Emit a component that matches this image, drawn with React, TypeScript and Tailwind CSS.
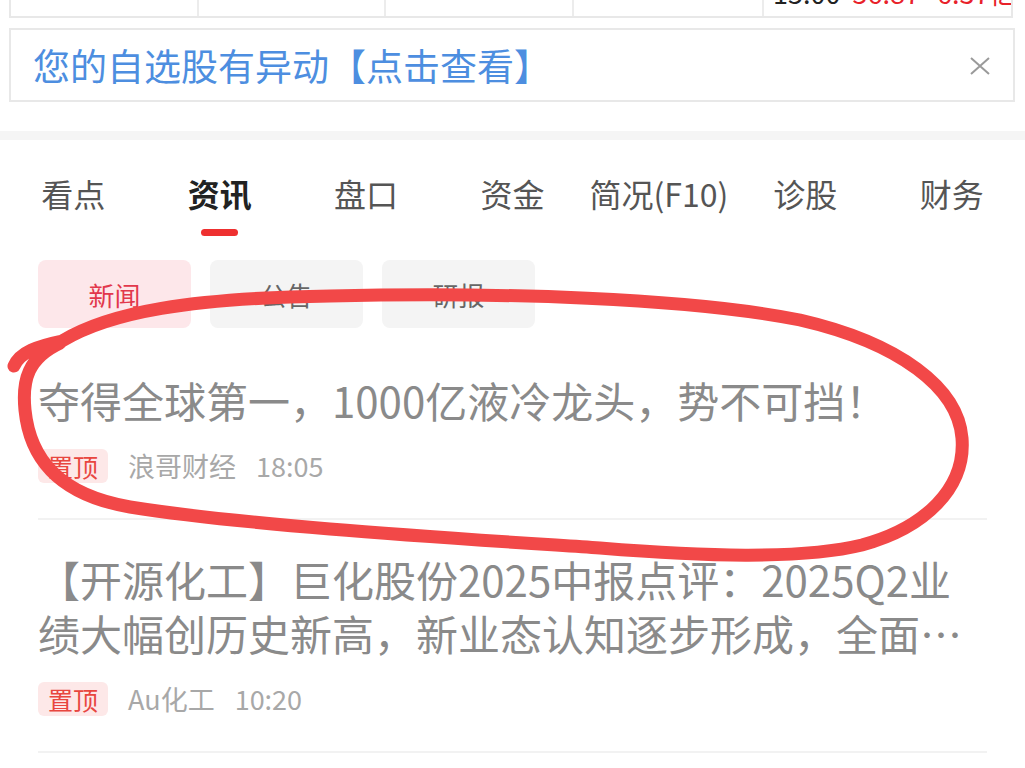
import React from "react";

const tabs = ["看点", "资讯", "盘口", "资金", "简况(F10)", "诊股", "财务"];
const subTabs = ["新闻", "公告", "研报"];

type News = {
  lines: string[];
  source: string;
  time: string;
};

const news: News[] = [
  {
    lines: ["夺得全球第一，1000亿液冷龙头，势不可挡！"],
    source: "浪哥财经",
    time: "18:05",
  },
  {
    lines: [
      "【开源化工】巨化股份2025中报点评：2025Q2业",
      "绩大幅创历史新高，新业态认知逐步形成，全面…",
    ],
    source: "Au化工",
    time: "10:20",
  },
];

const NewsItem: React.FC<{ item: News }> = ({ item }) => {
  return (
    <div className="pt-[32px] pb-[35px] border-b-2 border-[#f2f2f2]">
      {item.lines.map((line) => (
        <p key={line} className="text-[42px] leading-[54px] text-[#8a8a8a] whitespace-nowrap overflow-hidden">
          {line}
        </p>
      ))}
      <div className="flex items-center mt-[22px] gap-x-[20px]">
        <span className="h-[34px] px-[10px] flex items-center rounded-md bg-[#fde8e8] text-[25px] leading-[25px] text-[#e8463f]">
          置顶
        </span>
        <span className="text-[27px] leading-[34px] text-[#a8a8a8]">{item.source}</span>
        <span className="text-[27px] leading-[34px] text-[#a8a8a8]">{item.time}</span>
      </div>
    </div>
  );
};

export default function App() {
  return (
    <div className="relative w-[1025px] h-[768px] overflow-hidden bg-white font-['Noto_Sans_CJK_SC',sans-serif]">
      {/* quote table, last row cut off at the top */}
      <div className="flex h-[18px] ml-[9px] mr-[12px] border-x-2 border-b-2 border-[#e8e8e8] overflow-hidden">
        <div className="w-[186px] shrink-0" />
        <div className="w-[187px] shrink-0 border-l-2 border-[#ececec]" />
        <div className="w-[188px] shrink-0 border-l-2 border-[#ececec]" />
        <div className="w-[190px] shrink-0 border-l-2 border-[#ececec]" />
        <div className="flex-1 min-w-0 border-l-2 border-[#ececec] pl-[9px] flex items-start whitespace-nowrap text-[27px] leading-[27px] mt-[-21px]">
          <span className="text-[#222]">15:00</span>
          <span className="text-[#e8222a] ml-[12px]">56.87</span>
          <span className="text-[#e8222a] ml-[17px]">6.37亿</span>
        </div>
      </div>

      {/* alert banner */}
      <div className="mt-[10px] ml-[9px] mr-[10px] h-[74px] border-2 border-[#e8e8e8] flex items-center justify-between pl-[22px] pr-[23px]">
        <span className="text-[37px] leading-[40px] text-[#4d8ee0]">您的自选股有异动【点击查看】</span>
        <svg width="20" height="18" viewBox="0 0 20 18" className="mt-[2px]">
          <path d="M1 1 L19 17 M19 1 L1 17" stroke="#9a9a9a" strokeWidth="2" fill="none" />
        </svg>
      </div>

      <div className="mt-[29px] h-[9px] bg-[#f5f5f5]" />

      {/* main tabs */}
      <div className="flex pt-[33px]">
        {tabs.map((t) => (
          <div key={t} className="flex-1 flex flex-col items-center">
            <span
              className={
                t === "资讯"
                  ? "text-[32px] leading-[40px] font-bold text-[#222]"
                  : "text-[32px] leading-[40px] text-[#555]"
              }
            >
              {t}
            </span>
            <div className={t === "资讯" ? "mt-[16px] w-[37px] h-[7px] rounded-full bg-[#ee3030]" : "mt-[16px] h-[7px]"} />
          </div>
        ))}
      </div>

      {/* sub tabs */}
      <div className="flex gap-x-[19px] px-[38px] mt-[24px]">
        {subTabs.map((t, i) => (
          <div
            key={t}
            className={
              i === 0
                ? "w-[153px] h-[68px] rounded-lg bg-[#fde7ea] flex items-center justify-center text-[26px] text-[#e2384c]"
                : "w-[153px] h-[68px] rounded-lg bg-[#f4f4f4] flex items-center justify-center text-[26px] text-[#666]"
            }
          >
            {t}
          </div>
        ))}
      </div>

      {/* news list */}
      <div className="px-[38px] mt-[13px]">
        {news.map((n) => (
          <NewsItem key={n.time} item={n} />
        ))}
      </div>

      {/* hand-drawn red circle over the first headline */}
      <svg
        className="absolute inset-0 pointer-events-none"
        width="1025"
        height="768"
        viewBox="0 0 1025 768"
      >
        <path
          d="M14 366 C20 352 38 346 62 341 C110 312 190 298 330 296 C500 292 690 298 800 320 C900 343 958 388 962 438 C966 488 925 528 862 545 C800 560 700 556 600 548 C450 538 250 526 130 507 C60 495 30 460 25 410 C22 380 28 358 60 343"
          stroke="#f24848"
          strokeWidth="13"
          strokeLinecap="round"
          strokeLinejoin="round"
          fill="none"
        />
      </svg>
    </div>
  );
}
